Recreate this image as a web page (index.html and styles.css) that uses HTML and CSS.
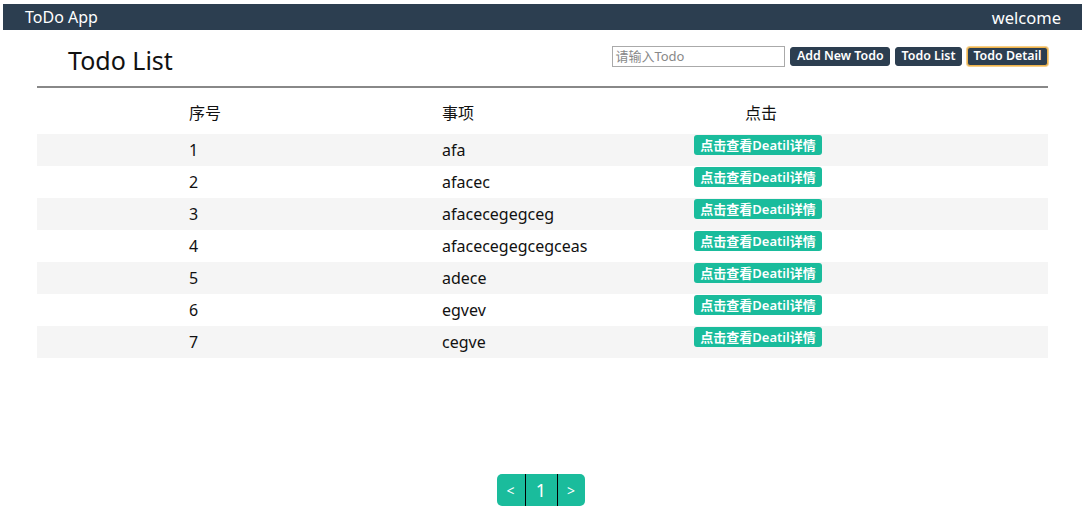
FILE: index.html
```html
<!DOCTYPE html>
<html>
<head>
<meta charset="utf-8">
<link rel="stylesheet" href="styles.css">
</head>
<body>
<header class="topbar">
  <span class="brand">ToDo App</span>
  <span class="welcome">welcome</span>
</header>
<main class="content">
  <div class="titlebar">
    <h1 class="title">Todo List</h1>
    <div class="actions">
      <input class="todo-input" type="text" placeholder="请输入Todo">
      <button class="btn">Add New Todo</button>
      <button class="btn">Todo List</button>
      <button class="btn btn-focus">Todo Detail</button>
    </div>
  </div>
  <div class="divider"></div>
  <div class="table">
    <div class="row head"><span class="c1">序号</span><span class="c2">事项</span><span class="c3 h3">点击</span></div>
    <div class="row odd"><span class="c1">1</span><span class="c2">afa</span><span class="c3"><button class="detail">点击查看Deatil详情</button></span></div>
    <div class="row"><span class="c1">2</span><span class="c2">afacec</span><span class="c3"><button class="detail">点击查看Deatil详情</button></span></div>
    <div class="row odd"><span class="c1">3</span><span class="c2">afacecegegceg</span><span class="c3"><button class="detail">点击查看Deatil详情</button></span></div>
    <div class="row"><span class="c1">4</span><span class="c2">afacecegegcegceas</span><span class="c3"><button class="detail">点击查看Deatil详情</button></span></div>
    <div class="row odd"><span class="c1">5</span><span class="c2">adece</span><span class="c3"><button class="detail">点击查看Deatil详情</button></span></div>
    <div class="row"><span class="c1">6</span><span class="c2">egvev</span><span class="c3"><button class="detail">点击查看Deatil详情</button></span></div>
    <div class="row odd"><span class="c1">7</span><span class="c2">cegve</span><span class="c3"><button class="detail">点击查看Deatil详情</button></span></div>
  </div>
  <nav class="pager">
    <button class="pg pg-prev">&lt;</button><button class="pg pg-num">1</button><button class="pg pg-next">&gt;</button>
  </nav>
</main>
</body>
</html>
```
FILE: styles.css
```css
html, body {
  margin: 0;
  padding: 0;
  background: #fff;
}
body {
  font-family: "Noto Sans", "Noto Sans CJK SC", sans-serif;
  color: #111;
  padding: 4px 5px 0 3px;
}
.topbar {
  height: 26px;
  background: #2c3e50;
  color: #fff;
  display: flex;
  align-items: center;
  justify-content: space-between;
  padding: 0 21px 0 22px;
  font-size: 16px;
}
.welcome {
  font-size: 16.5px;
}
.content {
  padding: 0 34px;
}
.titlebar {
  display: flex;
  align-items: center;
  justify-content: space-between;
  height: 56px;
}
.title {
  margin: 0 0 0 31px;
  font-size: 25px;
  font-weight: normal;
  line-height: 1;
  padding-top: 4px;
}
.actions {
  display: flex;
  align-items: center;
  gap: 5px;
  margin-top: -4px;
}
.todo-input {
  width: 173px;
  height: 21px;
  box-sizing: border-box;
  border: 1px solid #aaa;
  padding: 0 2px;
  font-family: inherit;
  font-size: 13px;
  margin: 0;
}
.todo-input::placeholder {
  color: #888;
}
.btn {
  height: 19px;
  background: #2c3e50;
  color: #fff;
  border: 1px solid #2c3e50;
  border-radius: 3px;
  font-family: inherit;
  font-size: 12.4px;
  font-weight: 600;
  padding: 0 5.5px;
  line-height: 1;
  margin: 0;
}
.btn-focus {
  border-color: #f0b44c;
  box-shadow: 0 0 0 1px #f6cf8a;
}
.divider {
  height: 2px;
  background: #888;
}
.table {
  margin-top: 11px;
}
.row {
  display: flex;
  height: 32px;
  font-size: 16px;
  padding-left: 152px;
}
.row.odd {
  background: #f5f5f5;
}
.row.head {
  height: 35px;
  align-items: flex-start;
}
.row .c1 { width: 253px; line-height: 33px; }
.row .c2 { width: 252px; line-height: 33px; }
.row .c3 { line-height: 1; }
.row.head .c1, .row.head .c2, .row.head .c3 { line-height: 29px; }
.h3 { padding-left: 51px; }
.detail {
  margin: 1px 0 0 0;
  height: 20px;
  width: 128px;
  background: #1abc9c;
  color: #fff;
  border: none;
  border-radius: 3px;
  font-family: inherit;
  font-size: 13px;
  font-weight: 600;
  padding: 0;
  line-height: 20px;
}
.pager {
  display: flex;
  justify-content: center;
  margin-top: 116px;
  padding-right: 4px;
}
.pg {
  background: #1abc9c;
  color: #fff;
  border: none;
  height: 32px;
  margin: 0;
  font-family: inherit;
  padding: 0;
}
.pg-prev {
  width: 29px;
  border-radius: 5px 0 0 5px;
  border-right: 1px solid #000;
  font-size: 14px;
}
.pg-num {
  width: 32px;
  font-size: 18px;
  border-right: 1px solid #000;
}
.pg-next {
  width: 27px;
  border-radius: 0 5px 5px 0;
  font-size: 14px;
}
```
